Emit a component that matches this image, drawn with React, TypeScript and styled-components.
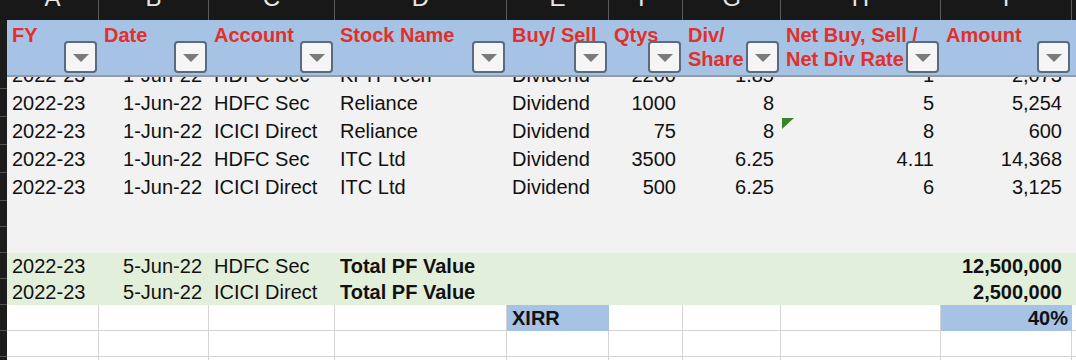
import React from 'react';
import styled, { createGlobalStyle, css } from 'styled-components';

const COLS = '7px 92px 110px 126px 172px 102px 74px 98px 160px 131px 1fr';
const FONT = '"Liberation Sans", Arial, Helvetica, sans-serif';

const GRAY = '#f2f2f2';
const GREEN = '#e2efda';
const BLUE = '#a6c3e5';
const WHITE = '#ffffff';

const Global = createGlobalStyle`
  html, body { margin: 0; padding: 0; background: #fff; }
  body { width: 1076px; height: 360px; overflow: hidden; font-family: ${FONT}; }
`;

const Sheet = styled.div`
  width: 1076px;
  height: 360px;
  overflow: hidden;
  display: flex;
  flex-direction: column;
  background: #fff;
`;

const Row = styled.div<{ $h: number; $lh?: number }>`
  flex: none;
  display: grid;
  grid-template-columns: ${COLS};
  height: ${(p) => p.$h}px;
  line-height: ${(p) => p.$lh ?? p.$h}px;
`;

const RowHead = styled.div`
  background: #1c1c1c;
  border-bottom: 1px solid #505050;
  box-sizing: border-box;
`;

const Corner = styled.div`
  background: #181818;
`;

const ColLetter = styled.div<{ $last?: boolean }>`
  background: #181818;
  border-right: ${(p) => (p.$last ? 'none' : '1px solid #5c5c5c')};
  box-sizing: border-box;
  overflow: hidden;
  color: #e6e6e6;
  font-size: 24px;
  text-align: center;
`;

const LetterGlyph = styled.span`
  display: block;
  line-height: 0;
  margin-top: -2px;
`;

const HeadCell = styled.div`
  position: relative;
  background: ${BLUE};
  color: #e1302b;
  font-weight: 700;
  font-size: 20px;
  line-height: 24px;
  padding: 3px 0 0 5px;
  white-space: nowrap;
  box-sizing: border-box;
  border-bottom: 2px solid #959ba3;
`;

const HeadStrip = styled.div`
  background: #1c1c1c;
`;

const FilterButton = styled.span`
  position: absolute;
  right: 2px;
  bottom: 2px;
  width: 33px;
  height: 32px;
  box-sizing: border-box;
  border: 2px solid #5a6a7f;
  border-radius: 4px;
  background: #f5f5f5;
  display: flex;
  align-items: center;
  justify-content: center;
  padding-top: 2px;
`;

const Cell = styled.div<{
  $align?: 'left' | 'right';
  $bold?: boolean;
  $bg?: string;
  $grid?: boolean;
  $pr?: number;
  $edge?: boolean;
}>`
  position: relative;
  display: flex;
  align-items: flex-end;
  justify-content: ${(p) => (p.$align === 'right' ? 'flex-end' : 'flex-start')};
  padding: 0 ${(p) => p.$pr ?? 7}px 0 5px;
  box-sizing: border-box;
  overflow: hidden;
  white-space: nowrap;
  font-size: 20px;
  color: #111;
  font-weight: ${(p) => (p.$bold ? 700 : 400)};
  background: ${(p) => p.$bg ?? WHITE};
  ${(p) =>
    p.$grid &&
    css`
      border-bottom: 1px solid #d4d4d4;
      border-right: ${p.$edge ? 'none' : '1px solid #d4d4d4'};
    `}
`;

const Flag = styled.svg`
  position: absolute;
  left: 1px;
  top: 1px;
`;

const letters = ['A', 'B', 'C', 'D', 'E', 'F', 'G', 'H', 'I', ''];

const headers: string[][] = [
  ['FY'],
  ['Date'],
  ['Account'],
  ['Stock Name'],
  ['Buy/ Sell'],
  ['Qtys'],
  ['Div/', 'Share'],
  ['Net Buy, Sell /', 'Net Div Rate'],
  ['Amount'],
];

const ALIGN: ('left' | 'right')[] = ['left', 'right', 'left', 'left', 'left', 'right', 'right', 'right', 'right'];

type RowSpec = {
  values: string[];
  h: number;
  lh?: number;
  bg: string;
  bold?: number[];
  flagCol?: number;
};

const rows: RowSpec[] = [
  { values: ['2022-23', '1-Jun-22', 'HDFC Sec', 'KPIT Tech', 'Dividend', '2200', '1.85', '1', '2,073'], h: 12, lh: 28, bg: GRAY },
  { values: ['2022-23', '1-Jun-22', 'HDFC Sec', 'Reliance', 'Dividend', '1000', '8', '5', '5,254'], h: 28, bg: GRAY },
  { values: ['2022-23', '1-Jun-22', 'ICICI Direct', 'Reliance', 'Dividend', '75', '8', '8', '600'], h: 28, bg: GRAY, flagCol: 7 },
  { values: ['2022-23', '1-Jun-22', 'HDFC Sec', 'ITC Ltd', 'Dividend', '3500', '6.25', '4.11', '14,368'], h: 28, bg: GRAY },
  { values: ['2022-23', '1-Jun-22', 'ICICI Direct', 'ITC Ltd', 'Dividend', '500', '6.25', '6', '3,125'], h: 28, bg: GRAY },
  { values: [], h: 26, bg: GRAY },
  { values: [], h: 26, bg: GRAY },
  { values: ['2022-23', '5-Jun-22', 'HDFC Sec', 'Total PF Value', '', '', '', '', '12,500,000'], h: 26, bg: GREEN, bold: [3, 8] },
  { values: ['2022-23', '5-Jun-22', 'ICICI Direct', 'Total PF Value', '', '', '', '', '2,500,000'], h: 26, bg: GREEN, bold: [3, 8] },
];

function DataRow({ spec }: { spec: RowSpec }) {
  return (
    <Row $h={spec.h} $lh={spec.lh}>
      <RowHead />
      {ALIGN.map((align, i) => (
        <Cell key={i} $align={align} $bg={spec.bg} $bold={spec.bold?.includes(i)} $pr={i === 8 ? 10 : 7}>
          {spec.values[i] ?? ''}
          {spec.flagCol === i && (
            <Flag width="12" height="11" viewBox="0 0 12 11">
              <polygon points="0,0 12,0 0,11" fill="#3c8228" />
            </Flag>
          )}
        </Cell>
      ))}
      <Cell $bg={spec.bg} />
    </Row>
  );
}

function WhiteRow({ xirr }: { xirr?: boolean }) {
  return (
    <Row $h={26}>
      <RowHead />
      {ALIGN.map((align, i) => {
        if (xirr && i === 4) {
          return (
            <Cell key={i} $bg={BLUE} $bold>
              XIRR
            </Cell>
          );
        }
        if (xirr && i === 8) {
          return (
            <Cell key={i} $align="right" $bg={BLUE} $bold $pr={4}>
              40%
            </Cell>
          );
        }
        return <Cell key={i} $align={align} $grid />;
      })}
      <Cell $grid $edge />
    </Row>
  );
}

export default function App() {
  return (
    <>
      <Global />
      <Sheet>
        <Row $h={20}>
          <Corner />
          {letters.map((l, i) => (
            <ColLetter key={i} $last={i === letters.length - 1}>
              <LetterGlyph>{l}</LetterGlyph>
            </ColLetter>
          ))}
        </Row>
        <Row $h={57} $lh={24}>
          <HeadStrip />
          {headers.map((lines, i) => (
            <HeadCell key={i}>
              {lines.map((ln, j) => (
                <div key={j}>{ln}</div>
              ))}
              <FilterButton>
                <svg width="16" height="8" viewBox="0 0 16 8">
                  <polygon points="0,0 16,0 8,8" fill="#7a7a7a" />
                </svg>
              </FilterButton>
            </HeadCell>
          ))}
          <HeadCell />
        </Row>
        {rows.map((r, i) => (
          <DataRow key={i} spec={r} />
        ))}
        <WhiteRow xirr />
        <WhiteRow />
        <WhiteRow />
      </Sheet>
    </>
  );
}
